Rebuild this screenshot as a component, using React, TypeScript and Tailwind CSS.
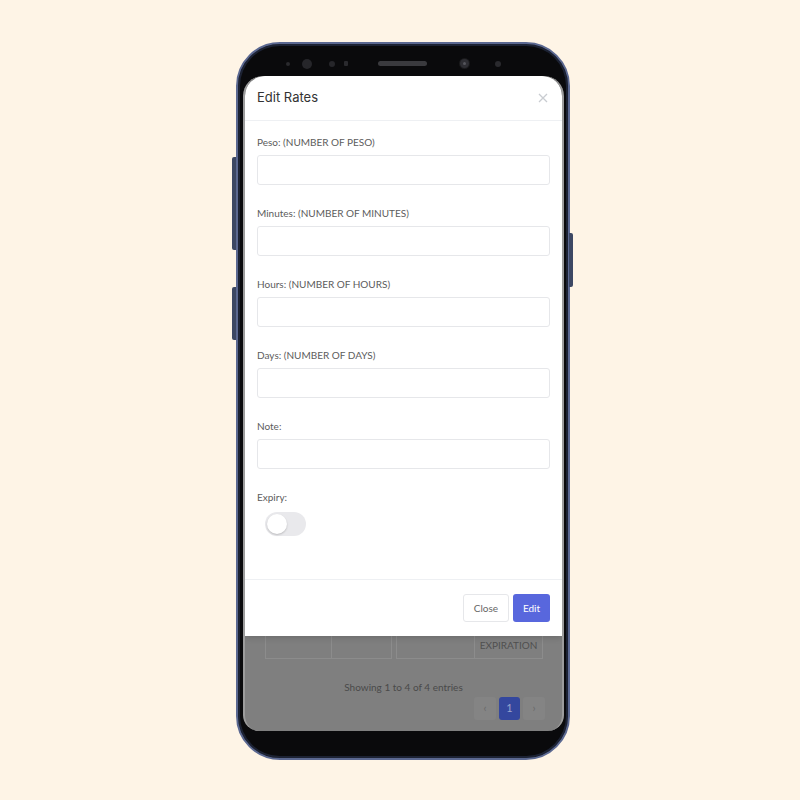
import React from "react";

const fields = [
  "Peso: (NUMBER OF PESO)",
  "Minutes: (NUMBER OF MINUTES)",
  "Hours: (NUMBER OF HOURS)",
  "Days: (NUMBER OF DAYS)",
  "Note:",
];

function CameraBar() {
  return (
    <div className="relative h-[32px]">
      <span className="absolute left-[43px] top-[18px] h-[4px] w-[4px] rounded-full bg-[#2a2a2e]" />
      <span className="absolute left-[59px] top-[15px] h-[10px] w-[10px] rounded-full bg-[#26262a]" />
      <span className="absolute left-[86px] top-[17px] h-[6px] w-[6px] rounded-full bg-[#26262a]" />
      <span className="absolute left-[101px] top-[17px] h-[5px] w-[4px] rounded-[1px] bg-[#2a2a2e]" />
      <span className="absolute left-[135px] top-[17px] h-[5px] w-[49px] rounded-full bg-[#3a3a3e]" />
      <span className="absolute left-[217px] top-[15px] h-[9px] w-[9px] rounded-full bg-[#2e2e33] ring-1 ring-[#1a1a1c]">
        <span className="absolute left-[3px] top-[3px] h-[3px] w-[3px] rounded-full bg-[#55555c]" />
      </span>
      <span className="absolute left-[252px] top-[17px] h-[6px] w-[6px] rounded-full bg-[#2a2a2e]" />
    </div>
  );
}

function Modal() {
  return (
    <div className="absolute inset-x-0 top-0 flex h-[560px] flex-col rounded-t-[20px] bg-white shadow-[0_2px_6px_rgba(0,0,0,0.15)]">
      <div className="flex h-[45px] shrink-0 items-center justify-between border-b border-[#eef0f3] pl-3 pr-[14px]">
        <h2 className="text-[13px] text-[#333]" style={{ fontFamily: "Inter, sans-serif" }}>
          Edit Rates
        </h2>
        <svg width="10" height="10" viewBox="0 0 10 10" className="text-[#c9ccd1]">
          <path d="M1 1l8 8M9 1l-8 8" stroke="currentColor" strokeWidth="1.3" />
        </svg>
      </div>
      <div className="flex flex-1 flex-col px-3 pt-[14px]">
        {fields.map((f) => (
          <div key={f} className="mb-[21px] flex flex-col">
            <label className="mb-[6px] text-[10px] leading-[14px] text-[#5c5c5c]">{f}</label>
            <input className="h-[30px] rounded-[3px] border border-[#e6e7ea] outline-none" />
          </div>
        ))}
        <label className="mb-[8px] text-[10px] leading-[14px] text-[#5c5c5c]">Expiry:</label>
        <div className="ml-2 flex h-[24px] w-[41px] items-center rounded-full bg-[#e9e9ec] px-[2px]">
          <span className="h-[20px] w-[20px] rounded-full bg-white shadow-[0_1px_2px_rgba(0,0,0,0.2)]" />
        </div>
      </div>
      <div className="flex h-[57px] shrink-0 items-center justify-end gap-1 border-t border-[#eef0f3] px-3">
        <button className="h-[28px] w-[46px] rounded-[3px] border border-[#e6e7ea] text-[10px] text-[#666]">
          Close
        </button>
        <button className="h-[28px] w-[37px] rounded-[3px] bg-[#5867dd] text-[10px] text-white">Edit</button>
      </div>
    </div>
  );
}

function Screen() {
  return (
    <div className="relative h-[655px] overflow-hidden rounded-t-[20px] rounded-b-[16px] border-x-2 border-[#9c9c9c] bg-[#7f7f7f]">
      <div className="flex h-full flex-col justify-end pb-[11px]">
        <div className="ml-[20px] flex h-[46px] text-[10px] text-[#505050]">
          <div className="flex w-[127px] border border-[#8c8c8c]">
            <div className="w-[66px] border-r border-[#8c8c8c]" />
            <div className="flex-1" />
          </div>
          <div className="ml-1 flex w-[147px] border border-[#8c8c8c]">
            <div className="flex-1 border-r border-[#8c8c8c]" />
            <div className="flex w-[67px] items-center justify-center pt-[18px]">EXPIRATION</div>
          </div>
        </div>
        <p className="mt-[21px] text-center text-[10px] text-[#4a4a4a]">Showing 1 to 4 of 4 entries</p>
        <div className="mr-[17px] mt-[2px] flex justify-end gap-[3px] text-[11px]">
          <span className="flex h-[23px] w-[22px] items-center justify-center rounded-[3px] bg-[#848484] text-[#6a6a6a]">
            ‹
          </span>
          <span className="flex h-[23px] w-[21px] items-center justify-center rounded-[3px] bg-[#34479e] text-[#9aa4cc]">
            1
          </span>
          <span className="flex h-[23px] w-[22px] items-center justify-center rounded-[3px] bg-[#848484] text-[#6a6a6a]">
            ›
          </span>
        </div>
      </div>
      <Modal />
    </div>
  );
}

export default function App() {
  return (
    <div
      className="flex h-[800px] w-full items-center justify-center bg-[#fef4e6]"
      style={{ fontFamily: "Lato, 'Noto Sans', sans-serif" }}
    >
      <div className="relative ml-[6px] mt-[2px] h-[718px] w-[334px]">
        <span className="absolute left-[-4px] top-[115px] h-[93px] w-[4px] rounded-l-[2px] bg-[#3c4763]" />
        <span className="absolute left-[-4px] top-[245px] h-[53px] w-[4px] rounded-l-[2px] bg-[#3c4763]" />
        <span className="absolute right-[-3px] top-[191px] h-[54px] w-[4px] rounded-r-[2px] bg-[#3c4763]" />
        <div className="h-full rounded-[44px] border-2 border-[#5b6891] bg-[#0a0a0c] pl-[5px] pr-[4px] shadow-[inset_0_0_0_2px_#1c2233]">
          <CameraBar />
          <Screen />
        </div>
      </div>
    </div>
  );
}
